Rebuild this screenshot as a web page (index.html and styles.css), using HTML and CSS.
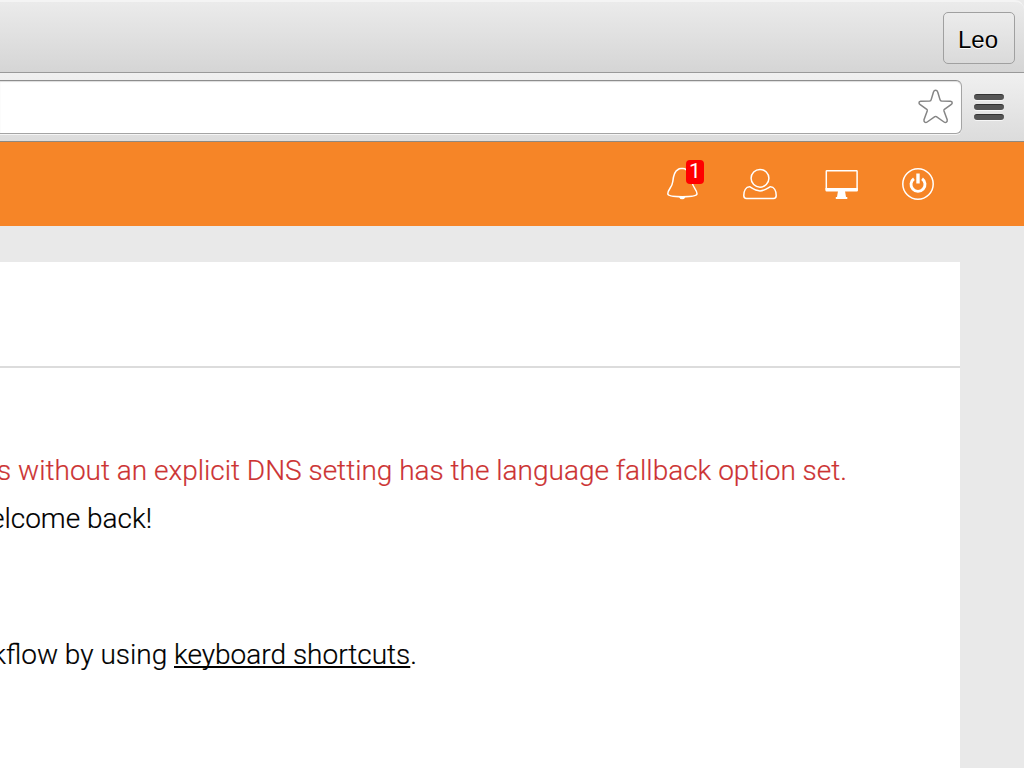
FILE: index.html
```html
<!DOCTYPE html>
<html lang="en">
<head>
<meta charset="utf-8">
<title>Dashboard</title>
<link rel="stylesheet" href="styles.css">
</head>
<body>
<div class="tabstrip"><button class="profile">Leo</button></div>
<div class="toolbar">
  <div class="address">
    <svg class="star" width="36" height="36" viewBox="0 0 36 36"><path d="M17.600 1.300Q19.100 1.300 19.800 3.200L22 10.600Q22.300 11.900 23.500 12L32.500 12.300Q34.300 12.600 34.200 14Q34.100 14.900 33 15.700L26.400 20.400Q25.700 21 26 22L29.200 30.800Q29.500 32.400 28.400 33.200Q27.300 33.900 26 33L18.400 27.700Q17.600 27.300 16.800 27.700L9.200 33Q7.900 33.900 6.800 33.200Q5.700 32.400 6 30.800L9.200 22Q9.500 21 8.800 20.400L2.200 15.700Q1.100 14.900 1 14Q.9 12.600 2.700 12.300L11.700 12Q12.900 11.900 13.200 10.600L15.400 3.200Q16.100 1.300 17.600 1.300Z"/></svg>
  </div>
  <div class="burger"><span class="bar"></span><span class="bar"></span><span class="bar"></span></div>
</div>
<header class="header">
  <div class="icon bell">
    <svg width="34" height="34" viewBox="0 0 34 34"><path d="M12.200 2.500Q13 1.400 15 1.400H17Q19 1.400 19.800 2.500C24.500 4.300 25.500 9.500 26 14.500C26.500 20.500 31 22.500 31 26.700C31 28.800 23.500 29.700 16.400 29.700S1.800 28.800 1.800 26.700C1.800 22.500 6.200 20.500 6.800 14.500C7.300 9.500 8 4.300 12.200 2.500Z"/><path class="fill" d="M12.700 29.500H19.700Q18.700 32.300 16.200 32.300T12.700 29.500Z"/></svg>
    <span class="badge">1</span>
  </div>
  <div class="icon user">
    <svg width="34" height="34" viewBox="0 0 34 34"><circle cx="17" cy="11.300" r="8.900"/><path d="M6.600 19.700C9.500 21.500 12.500 23.900 17 23.900S24.500 21.500 27.400 19.700C31 19.900 33.200 23.700 33.200 28.500C33.200 30.500 32.400 31.500 30.500 31.500H3.500C1.600 31.500.8 30.500.8 28.500C.8 23.700 3 19.900 6.600 19.700Z"/></svg>
  </div>
  <div class="icon screen">
    <svg width="34" height="34" viewBox="0 0 34 34"><rect x="2.300" y="3.700" width="30.800" height="19.500" rx=".6"/><path class="fill" d="M1.500 21H33.900V23.500Q33.900 24.500 32.900 24.500H2.500Q1.500 24.500 1.500 23.500Z"/><path class="fill" d="M14 24H21L22 30H23.300V32H11.800V30H13Z"/></svg>
  </div>
  <div class="icon power">
    <svg width="34" height="34" viewBox="0 0 34 34"><circle cx="17" cy="17" r="15.200"/><path class="arc" d="M12.900 11.700A7 7 0 1 0 21.100 11.700"/><path class="fill" d="M15.300 6.500H18.700V16.500H15.300Z"/></svg>
  </div>
</header>
<main class="page">
  <section class="panel">
    <div class="panel-head"></div>
    <p class="line alert"><span>s without an explicit DNS setting has the language fallback option set.</span></p>
    <p class="line welcome"><span>elcome back!</span></p>
    <p class="line hint"><span>kflow by using <a class="link">keyboard shortcuts</a>.</span></p>
  </section>
</main>
</body>
</html>
```
FILE: styles.css
```css
* { box-sizing: border-box; }
body { margin: 0; width: 1024px; height: 768px; overflow: hidden; background: #e9e9e9; font-family: Roboto, sans-serif; }
.tabstrip { height: 73px; display: flex; justify-content: flex-end; padding: 10px 9px 0 0; background: linear-gradient(#ebebeb, #d5d5d5); border-top: 2px solid #f4f4f4; border-bottom: 1px solid #999; border-top-right-radius: 9px; }
.profile { width: 72px; height: 52px; padding: 3px 2px 0 0; border: 1px solid #a0a0a0; border-radius: 5px; background: linear-gradient(#ececec, #dadada); font: 24px "Liberation Sans", Arial, sans-serif; color: #000; text-shadow: 0 1px 0 #fff; }
.toolbar { height: 69px; display: flex; background: linear-gradient(#f0f0f0, #dcdcdc); border-bottom: 1px solid #8e8880; padding-top: 7px; }
.address { width: 962px; height: 54px; display: flex; justify-content: flex-end; padding: 8px 7px 0 0; background: #fff; border: 1px solid #a4a4a4; border-top-color: #8d8d8d; border-left: 0; border-radius: 0 6px 6px 0; box-shadow: 0 1px 0 #f5f5f5, inset 0 1px 1px #ddd; }
.star { fill: #fff; stroke: #858585; stroke-width: 1.5; }
.burger { display: flex; flex-direction: column; gap: 4px; padding: 14px 0 0 12px; }
.bar { width: 30px; height: 6px; border-radius: 3px; background: #555; border-top: 1px solid #333; box-shadow: 0 1px 0 #f7f7f7; }
.header { height: 84px; display: flex; background: #f68527; padding: 25px 0 0 666px; }
.icon { position: relative; width: 34px; height: 34px; }
.icon svg { display: block; fill: none; stroke: #fff; stroke-width: 1.5; }
.icon .fill { fill: #fff; stroke: none; }
.icon .arc { stroke-width: 2.900; }
.user { margin-left: 43px; }
.screen { margin-left: 47px; }
.power { margin-left: 43px; }
.badge { position: absolute; left: 20px; top: -7px; width: 18px; height: 24px; border-radius: 4px; background: #f00; color: #fff; font: 21px/23px Roboto, sans-serif; text-align: center; }
.page { padding-top: 36px; }
.panel { width: 960px; height: 506px; background: #fff; }
.panel-head { height: 106px; border-bottom: 2px solid #dcdcdc; margin-bottom: 79px; }
.line { display: flex; justify-content: flex-end; margin: 0; height: 48px; white-space: nowrap; font-size: 28px; line-height: 48px; font-weight: 300; color: #000; -webkit-text-stroke: 0.2px currentColor; }
.alert { width: 847px; color: #cc3333; }
.welcome { width: 152px; }
.hint { width: 417px; margin-top: 88px; }
.link { text-decoration: underline; text-decoration-thickness: 2px; text-underline-offset: 2px; text-decoration-skip-ink: none; }
```
